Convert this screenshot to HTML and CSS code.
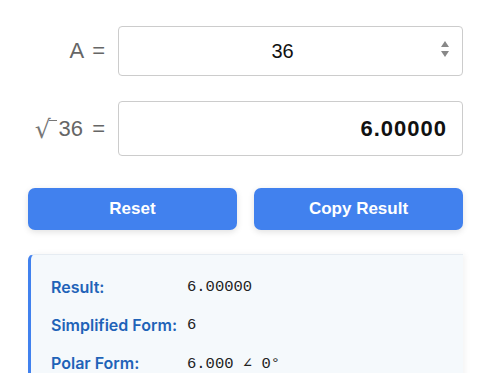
FILE: index.html
```html
<!doctype html>
<html>
<head>
<meta charset="utf-8">
<title>Square Root Calculator</title>
	<link rel="stylesheet" href="styles.css">
</head>
<body>
	<div class="calc">
		<!-- input row -->
		<div class="row">
			<label class="lbl" for="numA">A =</label>
			<div class="field">
				<input type="text" id="numA" class="inp inp-a" value="36" autofocus>
				<span class="spin"><i class="up"></i><i class="down"></i></span>
			</div>
		</div>
		<!-- result row -->
		<div class="row row2">
			<span class="lbl"><span class="root">&radic;</span>36 =</span>
			<div class="field">
				<input type="text" class="inp inp-out" value="6.00000" readonly>
			</div>
		</div>

		<div class="buttons">
			<button class="btn">Reset</button>
			<button class="btn">Copy Result</button>
		</div>

		<div class="result">
			<div class="res-grid">
				<span class="res-lbl">Result:</span>
				<span class="res-val">6.00000</span>
				<span class="res-lbl">Simplified Form:</span>
				<span class="res-val">6</span>
				<span class="res-lbl">Polar Form:</span>
				<span class="res-val">6.000 &ang; 0&deg;</span>
			</div>
		</div>
	</div>
</body>
</html>
```
FILE: styles.css
```css
/*Page*/
body{
	margin: 0;
	background: #fff;
	font-family: "Liberation Sans", Arial, sans-serif;
}

.calc{
	width: 435px;
	padding: 26px 0 0 28px;
}

/*Input rows*/
.row{
	display: flex;
	align-items: center;
	gap: 13px;
}
.row2{
	margin-top: 25px;
}

.lbl{
	width: 77px;
	text-align: right;
	font-size: 22px;
	word-spacing: 3px;
	color: #666;
	white-space: nowrap;
}
.root{
	position: relative;
	display: inline-block;
	line-height: 1;
	font-family: "DejaVu Sans", sans-serif;
	font-size: 25px;
	color: #777;
	margin-right: 8px;
	vertical-align: -2px;
}
/*bar over the root sign*/
.root::after{
	content: "";
	position: absolute;
	left: 14px;
	top: 3px;
	width: 8px;
	border-top: 1px solid #777;
}

.field{
	flex: 1;
	position: relative;
}

.inp{
	box-sizing: border-box;
	width: 100%;
	height: 50px;
	border: 1px solid #ccc;
	border-radius: 4px;
	font-family: "Liberation Sans", Arial, sans-serif;
	font-size: 20px;
	color: #111;
	outline: none;
	background: #fff;
}
.inp-a{
	text-align: center;
	padding: 0 30px 0 14px;
}
.inp-out{
	height: 55px;
	text-align: right;
	font-size: 22px;
	font-weight: bold;
	letter-spacing: 1px;
	padding: 0 15px;
}

/*spin arrows*/
.spin{
	position: absolute;
	right: 14px;
	top: 15px;
	display: flex;
	flex-direction: column;
	gap: 4px;
}
.spin i{
	display: block;
	width: 0;
	height: 0;
	border-left: 4px solid transparent;
	border-right: 4px solid transparent;
}
.spin .up{
	border-bottom: 6px solid #888;
}
.spin .down{
	border-top: 6px solid #888;
}

/*Buttons*/
.buttons{
	display: flex;
	gap: 17px;
	margin-top: 32px;
}
.btn{
	flex: 1;
	height: 42px;
	border: none;
	border-radius: 7px;
	background: #4181ee;
	color: #fff;
	font-family: "Liberation Sans", Arial, sans-serif;
	font-size: 17px;
	font-weight: bold;
	box-shadow: 0 2px 6px rgba(0,0,0,0.12);
}

/*Result box*/
.result{
	margin-top: 24px;
	background: #f5f9fc;
	border-left: 3px solid #4181ee;
	border-top: 1px solid #e6ecf2;
	border-radius: 6px 0 0 0;
	padding: 22px 0 30px 20px;
	box-shadow: 2px 0 6px rgba(0,0,0,0.05);
}
.res-grid{
	display: grid;
	grid-template-columns: auto 1fr;
	column-gap: 10px;
	row-gap: 18px;
	align-items: center;
}
.res-lbl{
	font-family: Inter, "Noto Sans", sans-serif;
	font-size: 16px;
	font-weight: 600;
	color: #1f63b8;
}
.res-val{
	font-family: "Liberation Mono", monospace;
	font-size: 15.5px;
	color: #222;
}
```
